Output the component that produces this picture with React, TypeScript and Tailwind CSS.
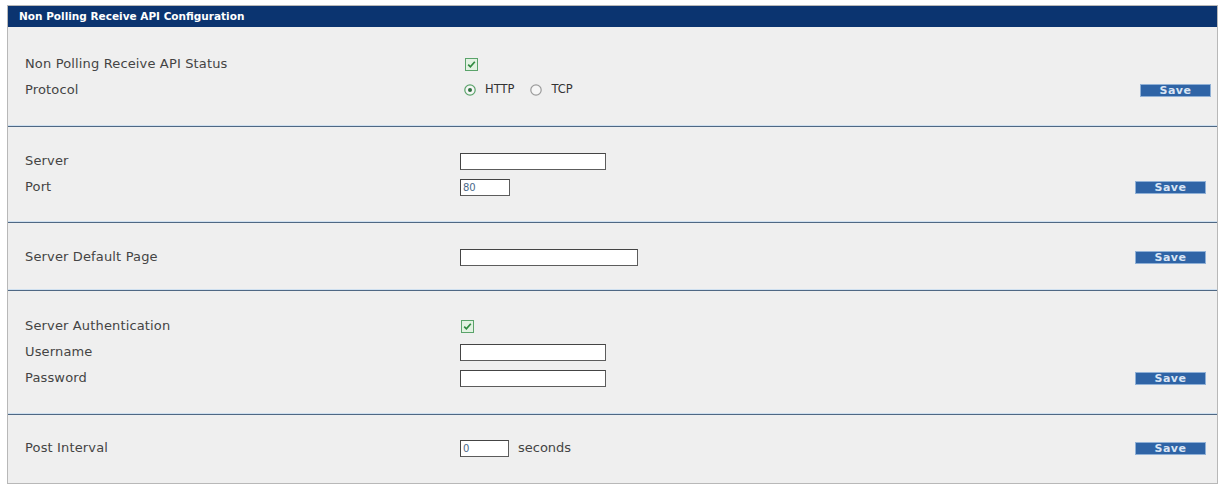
import React from "react";

const font = { fontFamily: '"DejaVu Sans", Verdana, sans-serif' };

function Check() {
  return (
    <svg width="13" height="13" viewBox="0 0 13 13" className="block">
      <rect x="0.5" y="0.5" width="12" height="12" fill="#e2f2e2" stroke="#5aa36a" />
      <path d="M3.2 6.6 L5.4 8.8 L9.8 3.8" fill="none" stroke="#2f8a3f" strokeWidth="1.7" />
    </svg>
  );
}

function Radio({ on }: { on?: boolean }) {
  return (
    <svg width="12" height="12" viewBox="0 0 12 12" className="block">
      <circle cx="6" cy="6" r="5.2" fill="#f6f6f6" stroke={on ? "#5aa36a" : "#9a9a9a"} strokeWidth="1.2" />
      {on && <circle cx="6" cy="6" r="2" fill="#2f6f3f" />}
    </svg>
  );
}

function SaveBtn() {
  return (
    <button className="flex h-[13px] w-[71px] items-center justify-center border border-[#8fb0d6] bg-[#2f64a6] text-[11px] font-bold leading-none tracking-[0.5px] text-[#d9e5f4]">
      Save
    </button>
  );
}

function Row({ label, children, save, pr }: { label: string; children?: React.ReactNode; save?: boolean; pr?: string }) {
  return (
    <div className={`flex h-[26px] items-center ${pr ?? "pr-[11px]"}`}>
      <div className="w-[435px] text-[13px] tracking-[0.15px] text-[#444]">{label}</div>
      <div className="flex flex-1 items-center">{children}</div>
      {save && <SaveBtn />}
    </div>
  );
}

function TextBox({ w, value }: { w: string; value?: string }) {
  return (
    <div className={`flex h-[17px] items-center border border-[#5c5c5c] border-t-[#444] border-l-[#444] bg-white pl-[2px] text-[10px] text-[#4a6a8a] ${w}`}>
      {value}
    </div>
  );
}

export default function App() {
  return (
    <div className="min-h-[485px] bg-white pl-[7px] pt-[5px]" style={font}>
      <div className="w-[1211px] border border-[#b8b8b8] bg-[#efefef]">
        <div className="flex h-[21px] items-center bg-[#0b3470] pl-[11px] text-[10.5px] font-bold text-white">
          Non Polling Receive API Configuration
        </div>

        <div className="h-[99px] pl-[17px] pt-[24px]">
          <Row label="Non Polling Receive API Status">
            <div className="ml-[5px]"><Check /></div>
          </Row>
          <Row label="Protocol" save pr="pr-[6px]">
            <div className="ml-[4px] flex items-center gap-[9px] text-[11.5px] text-[#333]">
              <Radio on />
              <span>HTTP</span>
              <span className="ml-[7px]"><Radio /></span>
              <span>TCP</span>
            </div>
          </Row>
        </div>

        <div className="h-[96px] border-t border-[#4f6884] pl-[17px] pt-[21px] shadow-[0_-1px_0_#cfe0f0]">
          <Row label="Server">
            <TextBox w="w-[146px]" />
          </Row>
          <Row label="Port" save>
            <TextBox w="w-[50px]" value="80" />
          </Row>
        </div>

        <div className="h-[68px] border-t border-[#4f6884] pl-[17px] pt-[21px] shadow-[0_-1px_0_#cfe0f0]">
          <Row label="Server Default Page" save>
            <TextBox w="w-[178px]" />
          </Row>
        </div>

        <div className="h-[124px] border-t border-[#4f6884] pl-[17px] pt-[22px] shadow-[0_-1px_0_#cfe0f0]">
          <Row label="Server Authentication">
            <div className="ml-[1px]"><Check /></div>
          </Row>
          <Row label="Username">
            <TextBox w="w-[146px]" />
          </Row>
          <Row label="Password" save>
            <TextBox w="w-[146px]" />
          </Row>
        </div>

        <div className="h-[69px] border-t border-[#4f6884] pl-[17px] pt-[20px] shadow-[0_-1px_0_#cfe0f0]">
          <Row label="Post Interval" save>
            <TextBox w="w-[49px]" value="0" />
            <span className="ml-[9px] text-[13px] text-[#444]">seconds</span>
          </Row>
        </div>
      </div>
    </div>
  );
}
